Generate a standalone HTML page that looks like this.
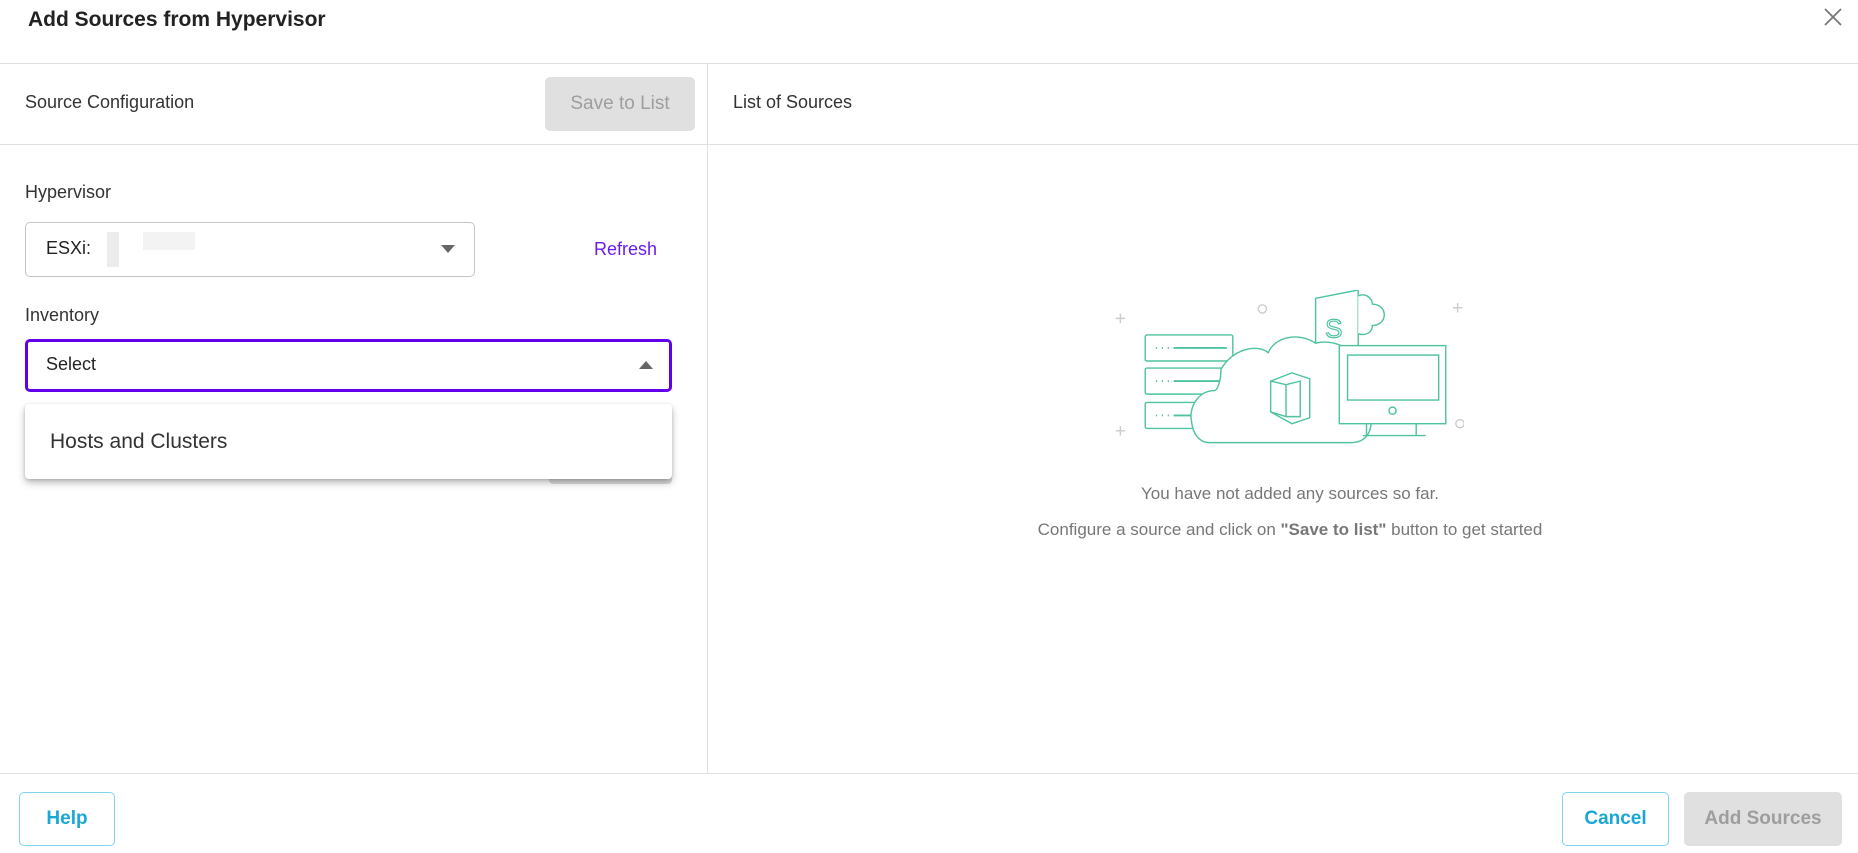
<!DOCTYPE html>
<html><head><meta charset="utf-8"><style>
*{box-sizing:border-box;margin:0;padding:0}
body{width:1858px;height:853px;background:#fff;font-family:"Liberation Sans",sans-serif;color:#333;position:relative;overflow:hidden}
.a{position:absolute}
.hl{position:absolute;height:1px;background:#e0e0e0}
.btn{position:absolute;border-radius:5px;display:flex;align-items:center;justify-content:center;font-size:19px;font-weight:bold}
</style></head><body>
<div class="a" style="left:28px;top:8px;font-size:21px;font-weight:bold;color:#222">Add Sources from Hypervisor</div>
<svg class="a" style="left:1823px;top:7px" width="20" height="20" viewBox="0 0 20 20"><path d="M2 2L18 18M18 2L2 18" stroke="#777" stroke-width="1.8"/></svg>
<div class="hl" style="left:0;top:63px;width:1858px"></div>
<div class="a" style="left:707px;top:63px;width:1px;height:710px;background:#e0e0e0"></div>
<div class="a" style="left:25px;top:92px;font-size:18px;color:#333">Source Configuration</div>
<div class="btn" style="left:545px;top:77px;width:150px;height:54px;background:#e0e0e0;color:#9e9e9e;font-weight:normal">Save to List</div>
<div class="a" style="left:733px;top:92px;font-size:18px;color:#333">List of Sources</div>
<div class="hl" style="left:0;top:144px;width:1858px"></div>

<div class="a" style="left:25px;top:182px;font-size:18px;color:#333">Hypervisor</div>
<div class="a" style="left:25px;top:222px;width:450px;height:55px;border:1px solid #c4c4c4;border-radius:5px"></div>
<div class="a" style="left:46px;top:238px;font-size:18px;color:#222">ESXi:</div>
<div class="a" style="left:107px;top:232px;width:12px;height:35px;background:#ececec"></div>
<div class="a" style="left:143px;top:232px;width:52px;height:18px;background:#f3f3f3"></div>
<svg class="a" style="left:441px;top:245px" width="14" height="8"><path d="M0 0H14L7 8Z" fill="#666"/></svg>
<div class="a" style="left:594px;top:239px;font-size:18px;color:#6a1bf0">Refresh</div>

<div class="a" style="left:25px;top:305px;font-size:18px;color:#333">Inventory</div>
<div class="a" style="left:25px;top:339px;width:647px;height:53px;border:3px solid #6200ea;border-radius:5px"></div>
<div class="a" style="left:46px;top:354px;font-size:18px;color:#222">Select</div>
<svg class="a" style="left:639px;top:361px" width="14" height="8"><path d="M0 8H14L7 0Z" fill="#666"/></svg>
<div class="a" style="left:549px;top:460px;width:123px;height:24px;background:#ddd;border-radius:4px"></div>
<div class="a" style="left:25px;top:404px;width:647px;height:75px;background:#fff;border-radius:4px;box-shadow:0 4px 8px rgba(0,0,0,.25),0 1px 3px rgba(0,0,0,.15)"></div>
<div class="a" style="left:50px;top:430px;font-size:21px;color:#333">Hosts and Clusters</div>

<svg class="a" style="left:1114px;top:290px" width="350" height="155" viewBox="940 245 295 131" fill="none" stroke="#4fc3a1" stroke-width="1.2">
<g stroke="#ccc"><path d="M945 265v8M941 269h8M945 360v8M941 364h8M1230 256v8M1226 260h8"/><circle cx="1065" cy="261" r="3.5"/><circle cx="1232" cy="358" r="3.5"/></g>
<rect x="966" y="283" width="74" height="22" rx="1.5"/><rect x="966" y="311" width="74" height="22" rx="1.5"/><rect x="966" y="340" width="74" height="22" rx="1.5"/>
<g stroke-width="1.6"><path d="M975 294h1M980 294h1M985 294h1M990 294h45M975 322h1M980 322h1M985 322h1M990 322h45M975 351h1M980 351h1M985 351h1M990 351h35"/></g>
<path d="M1110 252L1146 245V295H1110Z" fill="#fff"/><path d="M1146 250c6-3 12 2 12 7 6 0 10 4 10 9 0 5-4 9-10 9 0 6-6 9-12 7" fill="#fff"/>
<text x="1118" y="285" font-family="Liberation Sans" font-size="22" fill="none" stroke="#4fc3a1" stroke-width="1">S</text>
<path d="M1020 374H1140C1155 374 1160 360 1155 348 1162 340 1160 325 1150 320 1150 300 1130 285 1110 290 1095 280 1075 285 1070 298 1060 290 1040 295 1030 312 1030 320 1028 328 1025 330 1010 330 1003 345 1005 355 1006 367 1012 374 1020 374Z" fill="#fff"/>
<path d="M1072 322L1090 315 1105 320V353L1090 358 1072 348Z" fill="#fff"/><path d="M1072 322L1085 325V352L1072 348M1085 325L1097 322V352L1085 352"/>
<rect x="1130" y="292" width="90" height="66" fill="#fff"/><rect x="1137" y="300" width="77" height="38"/><circle cx="1175" cy="347" r="3"/>
<path d="M1153 358V368H1195V358M1150 368H1203"/>
</svg>
<div class="a" style="left:1090px;top:484px;width:400px;text-align:center;font-size:17px;color:#777">You have not added any sources so far.</div>
<div class="a" style="left:990px;top:520px;width:600px;text-align:center;font-size:17px;color:#777">Configure a source and click on <b>"Save to list"</b> button to get started</div>

<div class="hl" style="left:0;top:773px;width:1858px"></div>
<div class="btn" style="left:19px;top:792px;width:96px;height:54px;border:1px solid #7fd6ee;color:#1aa7d6">Help</div>
<div class="btn" style="left:1562px;top:792px;width:107px;height:54px;border:1px solid #7fd6ee;color:#1aa7d6">Cancel</div>
<div class="btn" style="left:1684px;top:792px;width:158px;height:54px;background:#e0e0e0;color:#9e9e9e">Add Sources</div>
</body></html>
